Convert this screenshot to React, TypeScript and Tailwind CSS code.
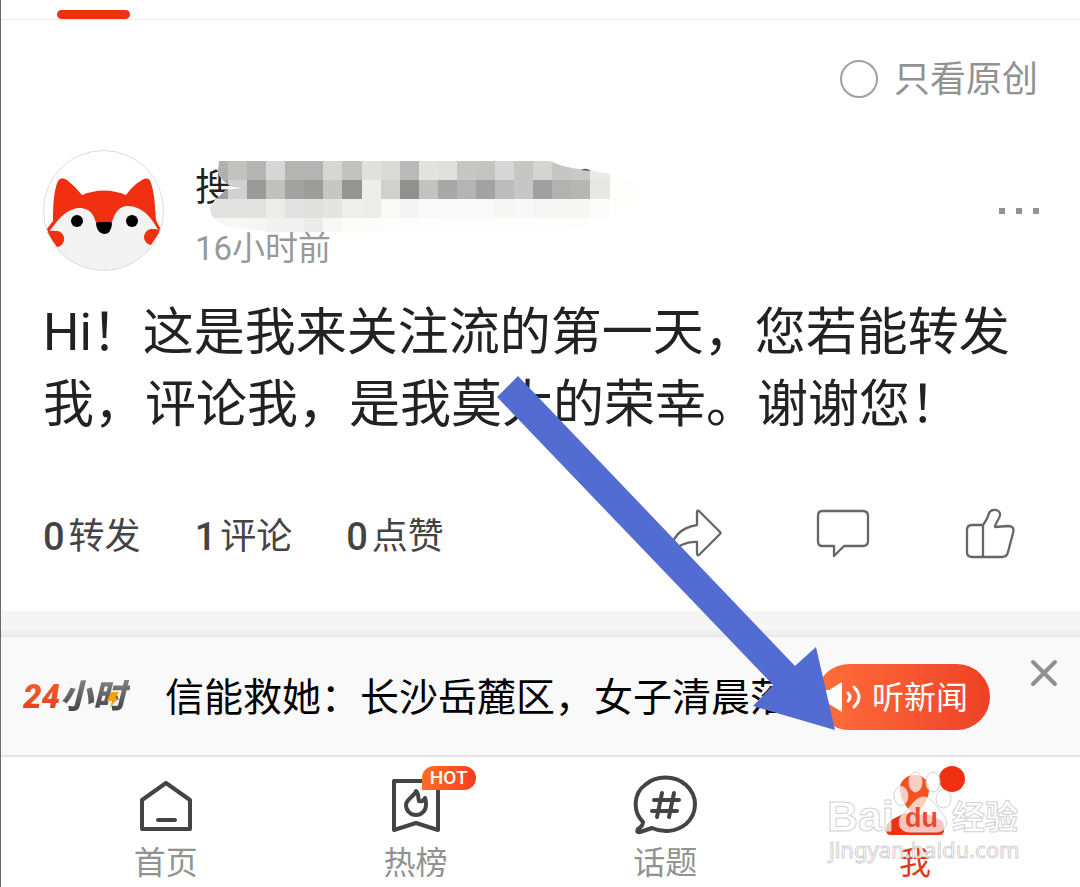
import React from "react";

const MOSAIC = [
  ["#b0b0ae", "#c2c2c0", "#b4b4b2", "#d6d6d6", "#b4b4b2", "#b4b4b4", "#d6d6d4", "#c2c2c0", "#e0e0de", "#dadad8", "#bababa", "#e2e2e0", "#e0e0de", "#c6c6c4", "#c4c4c2", "#d6d6d6", "#c6c6c4", "#d4d4d2", "#c6c6c4", "#c8c8c6", "#eaeaea"],
  ["#a0a0a0", "#d0d0d0", "#9a9a98", "#c0c0be", "#a2a2a0", "#9c9c9a", "#c6c6c4", "#949492", "#ededec", "#d0d0ce", "#90908e", "#c2c2c0", "#a8a8a6", "#b4b4b4", "#a2a2a2", "#bcbcbc", "#c6c6c6", "#a0a0a0", "#b2b2b0", "#b6b6b4", "#e7e7e6"],
  ["#e2e2e0", "#e2e2e0", "#e2e2e0", "#ececea", "#e2e2e2", "#e0e0de", "#e4e4e2", "#efefee", "#ececea", "#fafaf9", "#f4f4f5", "#fafafa", "#f9f9f8", "#f9f9fa", "#f9f9fa", "#f7f7f6", "#f8f8f8", "#f6f6f5", "#f6f6f5", "#f6f6f5", "#fcfcfb"],
  ["#f7f7f6", "#f7f7f6", "#f5f5f4", "#f1f1f0", "#f1f1f0", "#ebebea", "#f8f8f7", "#fbfbfa", "#fcfcfb", "#fdfdfc", "#fdfdfc", "#fdfdfc", "#fdfdfc", "#fdfdfc", "#fdfdfc", "#fdfdfc", "#fdfdfc", "#fdfdfc", "#fdfdfc", "#fdfdfc", "#fefefd"],
];

const COUNTS = [
  { num: 0, label: "转发" },
  { num: 1, label: "评论" },
  { num: 0, label: "点赞" },
];

const Avatar = () => (
  <svg className="h-[121px] w-[121px] shrink-0" viewBox="0 0 121 121">
    <defs>
      <clipPath id="face">
        <circle cx="60.5" cy="60.5" r="60" />
      </clipPath>
    </defs>
    <circle cx="60.5" cy="60.5" r="60" fill="#fff" />
    <g clipPath="url(#face)">
      <path
        d="M10 71 C10 54 11 40 15 31 Q18 26 24 30 Q33 37 39 45 Q61 36 83 45 Q90 35 99 30 Q106 26 108 33 C112 45 112 58 113 70 L119 82 V100 H0 V84 Z"
        fill="#f03010"
      />
      <path
        d="M4 85 C13 72 22 59 36 58 C49 58 51 67 54 75 L61 82 L68 75 C71 66 74 56 85 56 C99 56 110 68 117 84 L121 90 V121 H0 V90 Z"
        fill="#f3f3f3"
      />
      <circle cx="13" cy="89" r="8" fill="#f03010" />
      <circle cx="110" cy="87" r="8" fill="#f03010" />
    </g>
    <path d="M0 76 L4 83 L15 98 L10 104 A60 60 0 0 1 0 76 Z M121 76 L117 82 L107 95 L111 104 A60 60 0 0 0 121 76 Z" fill="#fff" />
    <path d="M4 82 L14 97 A8 8 0 0 0 12 81 Q8 80 4 82 Z M117 81 L108 95 A8 8 0 0 1 110 79 Q114 79 117 81 Z" fill="#f03010" />
    <circle cx="34" cy="71" r="6" fill="#000" />
    <circle cx="89" cy="71" r="6" fill="#000" />
    <path d="M53 74 Q53 72 56 72 H67 Q69 72 69 74 Q68 84 61 84 Q54 83 53 74 Z" fill="#000" />
    <circle cx="60.5" cy="60.5" r="60" fill="none" stroke="#dcdcdc" />
  </svg>
);

const Mosaic = () => (
  <svg className="absolute -top-2 left-[14px] h-[76px] w-[440px]" viewBox="211 161 440 76" aria-hidden="true">
    <defs>
      <clipPath id="smear">
        <path d="M221 161 H552 Q562 166 574 168 Q600 171 626 177 Q650 184 644 200 Q600 226 560 234 L330 236 Q260 232 228 226 Q212 220 212 208 L217 200 L228 190 L244 188 L235 187 Q222 181 220 172 Z" />
      </clipPath>
    </defs>
    <g clipPath="url(#smear)">
      <rect x="211" y="161" width="440" height="76" fill="#fefefd" />
      {MOSAIC.map((row, y) =>
        row.map((fill, x) => (
          <rect key={x + "-" + y} x={211 + x * 19 + Math.round(x / 15)} y={161 + y * 19} width="20" height={y === 3 ? 14 : 19} fill={fill} />
        ))
      )}
    </g>
    <path d="M583 170 Q588 167 593 171 Z" fill="#555" />
  </svg>
);

const HomeIcon = () => (
  <svg className="h-16 w-16" viewBox="0 0 64 64" fill="none" stroke="#444" strokeWidth="4" strokeLinejoin="round" strokeLinecap="round">
    <path d="M32 10 L8 27 V56 H56 V27 Z" />
    <path d="M24 47 H41" />
  </svg>
);

const HotIcon = () => (
  <svg className="h-16 w-16" viewBox="0 0 64 64" fill="none" stroke="#444" strokeWidth="4" strokeLinejoin="round">
    <path d="M10 8 H54 V57 L32 50 L10 57 Z" />
    <path d="M32 18 C31 23 22 26 22 32 A10 10 0 0 0 42 32 C42 29 42 28 41 25 C39 28 38 29 35 28 C34 25 35 21 32 18 Z" strokeWidth="4" />
  </svg>
);

const TopicIcon = () => (
  <svg className="h-16 w-16" viewBox="0 0 64 64" fill="none" stroke="#444" strokeWidth="4" strokeLinejoin="round" strokeLinecap="round">
    <path d="M10 49 C-1 38 1 20 12 12 C23 2 42 2 53 12 C65 23 65 40 53 51 C43 59 30 60 19 55 L7 59 Q3 60 5 56 Q10 53 10 49 Z" />
    <path d="M29 20 L24 44 M41 20 L36 44 M21 27 H46 M19 38 H44" />
  </svg>
);

const MeIcon = () => (
  <svg className="h-16 w-16" viewBox="0 0 64 64">
    <path d="M32 2 C41 2 47 9 46 18 C45 28 39 34 36 39 Q32 42 28 39 C24 34 18 28 17 18 C16 9 22 2 32 2 Z" fill="#f4511e" />
    <path d="M10 46 L22 40 Q32 45 42 40 L56 46 Q61 49 61 55 V57 Q61 62 56 62 H8 Q3 62 3 57 V55 Q4 49 10 46 Z" fill="#f03010" />
  </svg>
);

const TABS = [
  { label: "首页", icon: <HomeIcon /> },
  { label: "热榜", icon: <HotIcon />, hot: true },
  { label: "话题", icon: <TopicIcon /> },
  { label: "我", icon: <MeIcon />, active: true },
];

const Watermark = () => (
  <svg
    className="pointer-events-none absolute top-[10px] left-[821px] h-[104px] w-[204px]"
    viewBox="822 767 204 104"
    fill="#fff"
    fillOpacity="0.72"
    stroke="#d2d2d2"
    strokeWidth="1"
  >
    <text x="827" y="831" fontSize="43" fontWeight="700" fontFamily="Liberation Sans, sans-serif">Bai</text>
    <ellipse cx="901" cy="796" rx="7" ry="9.5" />
    <ellipse cx="915.5" cy="782" rx="6.5" ry="10" />
    <ellipse cx="933" cy="782" rx="7" ry="10" />
    <ellipse cx="943.5" cy="799" rx="7.5" ry="9" />
    <path d="M924 797 C932 797 936 807 942 813 C950 821 947 832 936 832 H910 C898 832 896 820 904 813 C912 806 915 797 924 797 Z" />
    <text x="905" y="827" fontSize="27" fontWeight="700" fill="#e23a1c" fillOpacity="0.9" stroke="none" fontFamily="Liberation Sans, sans-serif">du</text>
    <text x="952" y="829" fontSize="33" fontWeight="700" fontFamily="Noto Sans CJK SC, sans-serif">经验</text>
    <text x="829" y="858" fontSize="22" fontFamily="Noto Sans, sans-serif">jingyan.baidu.com</text>
  </svg>
);

const App = () => {
  return (
    <div className="relative overflow-hidden border-l border-[#6b6b6b] bg-white font-['Roboto','Noto_Sans_CJK_SC',sans-serif] text-[#222]">
      <header className="flex h-5 items-end border-b border-[#e8e8e8] pl-14">
        <div className="h-[9px] w-[73px] rounded-full bg-[#f03010]" />
      </header>

      <main>
        <div className="mt-10 flex justify-end pr-[42px]">
          <label className="flex items-center gap-4 text-[36px] leading-10 text-[#929292]">
            <input type="checkbox" className="-mt-[2px] h-[38px] w-[38px] appearance-none rounded-full border-2 border-[#a0a0a0]" />
            只看原创
          </label>
        </div>

        <article className="mt-[50px] px-[42px]">
          <div className="flex items-start">
            <Avatar />
            <div className="relative ml-[31px] flex-1 pt-[19px]">
              <div className="relative">
                <h2 className="text-[38px] leading-9">搜</h2>
                <Mosaic />
              </div>
              <p className="relative mt-6 text-[33px] leading-10 text-[#999]">16小时前</p>
            </div>
            <button aria-label="更多" className="mt-[58px] -mr-px flex gap-[11px]">
              <span className="h-[6px] w-[6px] bg-[#929292]" />
              <span className="h-[6px] w-[6px] bg-[#929292]" />
              <span className="h-[6px] w-[6px] bg-[#929292]" />
            </button>
          </div>

          <p className="mt-[26px] text-[51px] leading-[72px]">
            Hi！这是我来关注流的第一天，您若能转发我，评论我，是我莫大的荣幸。谢谢您！
          </p>

          <div className="mt-[71px] flex h-12 items-center justify-between">
            <div className="flex gap-[54px] pt-[2px] text-[36px] text-[#444]">
              {COUNTS.map((c) => (
                <span key={c.label} className="flex items-center gap-1 leading-10">
                  <b className="text-[38px] font-medium">{c.num}</b>
                  {c.label}
                </span>
              ))}
            </div>
            <div className="flex gap-[94px] pr-5 pb-1">
              <button aria-label="转发">
                <svg className="h-[54px] w-[54px]" viewBox="0 0 54 54" fill="none" stroke="#666" strokeWidth="2.3" strokeLinejoin="round">
                  <path d="M29 5 Q29 3 31 4 L52 25 Q53 26 52 27 L31 48 Q29 49 29 46 V35 Q14 34 2 47 Q4 22 29 18 Z" />
                </svg>
              </button>
              <button aria-label="评论">
                <svg className="h-[54px] w-[54px]" viewBox="0 0 54 54" fill="none" stroke="#666" strokeWidth="2.3" strokeLinejoin="round">
                  <path d="M6 4 H47 Q52 4 52 9 V34 Q52 39 47 39 H28 L18 49 V39 H6 Q2 39 2 34 V9 Q2 4 6 4 Z" />
                </svg>
              </button>
              <button aria-label="点赞">
                <svg className="h-[54px] w-[54px]" viewBox="0 0 54 54" fill="none" stroke="#666" strokeWidth="2.3" strokeLinejoin="round">
                  <path d="M19 18 H8 Q3 18 3 23 V45 Q3 50 8 50 H38 Q43 50 44 45 L49 26 Q51 19 44 19 L31 20 Q31 18 34 13 Q39 5 32 3 Q27 2 25 6 Q24 11 19 18 Z M19 18 V50" />
                </svg>
              </button>
            </div>
          </div>
        </article>
      </main>

      <div className="mt-[51px] h-[15px] bg-[#f5f5f5]" />
      <div className="h-[11px] bg-linear-to-b from-[#f9f9f9] to-[#e9e9e9]" />

      <section className="flex h-[120px] items-center border-b-2 border-[#e4e4e4] bg-[#f9f9f9] pt-[2px] pl-[22px]">
        <div className="flex shrink-0 items-center text-[33px] leading-10 font-black italic">
          <span className="bg-linear-to-b from-[#f4602c] to-[#e63a1c] bg-clip-text text-transparent">24</span>
          <span className="relative bg-linear-to-b from-[#888] to-[#3c3c3c] bg-clip-text pr-1 text-transparent">
            小时
            <svg className="absolute top-[15px] left-[47px] h-4 w-3" viewBox="0 0 12 16">
              <path d="M4 0 H12 L8 6 H11 L3 16 L5 9 H0 Z" fill="#f5a30a" />
            </svg>
          </span>
        </div>
        <p className="ml-[35px] w-0 flex-1 overflow-hidden pt-[2px] text-[39px] leading-[48px] whitespace-nowrap text-black">
          信能救她：长沙岳麓区，女子清晨落
        </p>
        <button className="ml-10 flex h-[66px] shrink-0 items-center gap-[10px] rounded-full bg-linear-to-r from-[#ff6e3c] to-[#ee4025] pr-[22px] pl-1 text-[32px] text-white">
          <svg className="h-8 w-[42px]" viewBox="0 0 42 32" fill="none" stroke="#fff" strokeWidth="3" strokeLinecap="round">
            <path d="M3 9 H9 L22 1 V31 L9 23 H3 Z" fill="#fff" stroke="none" />
            <path d="M28 12 Q32 16 28 20 M34 6 Q44 16 34 26" />
          </svg>
          <span className="pt-[2px]">听新闻</span>
        </button>
        <button aria-label="关闭" className="mr-[22px] mb-12 ml-10 shrink-0">
          <svg className="h-7 w-7" viewBox="0 0 28 28" stroke="#909090" strokeWidth="4" strokeLinecap="round">
            <path d="M3 3 L25 25 M25 3 L3 25" />
          </svg>
        </button>
      </section>

      <nav className="relative grid h-[130px] grid-cols-4 px-10">
        {TABS.map((tab) => (
          <a key={tab.label} href="#" className="flex flex-col items-center pt-4">
            <span className="relative">
              {tab.icon}
              {tab.hot && (
                <span className="absolute -top-[7px] left-[38px] flex h-6 w-[54px] items-center justify-center rounded-full rounded-bl-none bg-linear-to-r from-[#fb6d24] to-[#fb3a20] text-[19px] font-medium text-white">
                  HOT
                </span>
              )}
              {tab.active && <span className="absolute -top-[7px] left-14 h-[26px] w-[26px] rounded-full bg-[#f03010]" />}
            </span>
            <span className={tab.active ? "mt-[6px] text-[32px] leading-10 text-[#e23a1c]" : "mt-[6px] text-[32px] leading-10 text-[#929292]"}>
              {tab.label}
            </span>
          </a>
        ))}
        <Watermark />
      </nav>

      {/* pointer to the "me" tab */}
      <svg className="pointer-events-none absolute top-[376px] left-[496px] h-[355px] w-[340px]" viewBox="497 376 340 355">
        <path d="M518 376 L795 666 L816 647 L835 730 L753 706 L773 685 L497 397 Z" fill="#526cd2" />
      </svg>
    </div>
  );
};

export default App;
